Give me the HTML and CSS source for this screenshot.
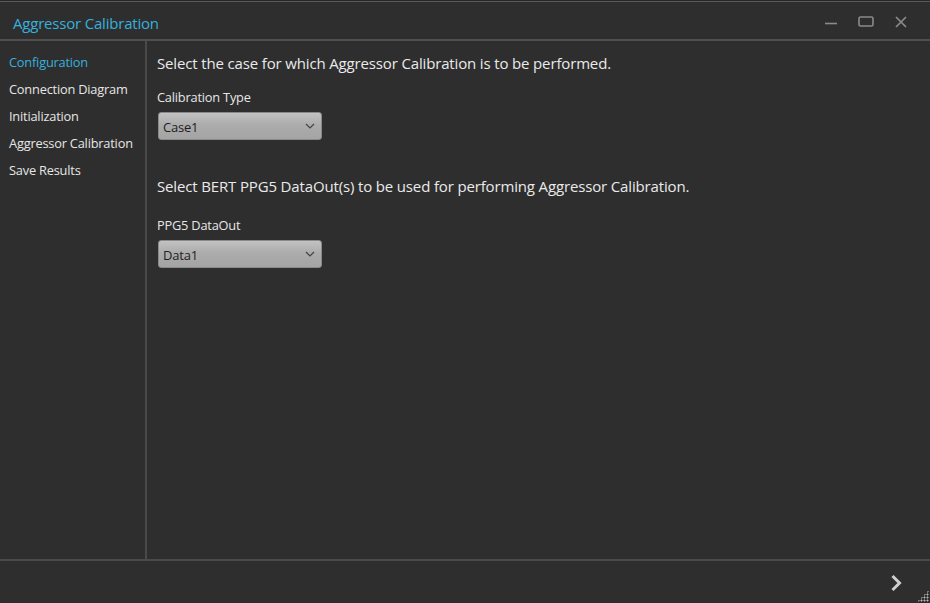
FILE: index.html
```html
<!DOCTYPE html>
<html>
<head>
<meta charset="utf-8">
<link rel="stylesheet" href="styles.css">
</head>
<body>
<div class="window">
  <div class="topstrip"></div>
  <header class="titlebar">
    <div class="title">Aggressor Calibration</div>
    <div class="controls">
      <svg class="ctl" width="14" height="14" viewBox="0 0 14 14"><path d="M1 8.5h12" stroke="#8a8a8a" stroke-width="1.6"/></svg>
      <svg class="ctl" width="16" height="14" viewBox="0 0 16 14"><rect x="1" y="2" width="14" height="9" rx="1.5" fill="none" stroke="#8a8a8a" stroke-width="1.6"/></svg>
      <svg class="ctl" width="14" height="14" viewBox="0 0 14 14"><path d="M2 2l10 10M12 2L2 12" stroke="#8a8a8a" stroke-width="1.7"/></svg>
    </div>
  </header>
  <div class="body">
    <nav class="sidebar">
      <div class="nav-item active">Configuration</div>
      <div class="nav-item">Connection Diagram</div>
      <div class="nav-item">Initialization</div>
      <div class="nav-item">Aggressor Calibration</div>
      <div class="nav-item">Save Results</div>
    </nav>
    <main class="content">
      <p class="instr">Select the case for which Aggressor Calibration is to be performed.</p>
      <div class="label">Calibration Type</div>
      <div class="select"><span>Case1</span>
        <svg width="10" height="6" viewBox="0 0 10 6"><path d="M1 1l4 4 4-4" fill="none" stroke="#444" stroke-width="1.2"/></svg>
      </div>
      <p class="instr second">Select BERT PPG5 DataOut(s) to be used for performing Aggressor Calibration.</p>
      <div class="label second">PPG5 DataOut</div>
      <div class="select"><span>Data1</span>
        <svg width="10" height="6" viewBox="0 0 10 6"><path d="M1 1l4 4 4-4" fill="none" stroke="#444" stroke-width="1.2"/></svg>
      </div>
    </main>
  </div>
  <footer class="footer">
    <svg class="next" width="12" height="18" viewBox="0 0 12 18"><path d="M2.5 2l7 7-7 7" fill="none" stroke="#cfcfcf" stroke-width="3"/></svg>
    <div class="grip"></div>
  </footer>
</div>
</body>
</html>
```
FILE: styles.css
```css
html, body {
  margin: 0;
  padding: 0;
  background: #2d2d2d;
}
body {
  font-family: "Open Sans", "Noto Sans", sans-serif;
  color: #e8e8e8;
}
.window {
  width: 930px;
  height: 603px;
  display: flex;
  flex-direction: column;
  background: #2e2e2e;
  overflow: hidden;
}
.topstrip {
  height: 1px;
  background: #262626;
  border-bottom: 1px solid #5a5a5a;
}
.titlebar {
  height: 37px;
  display: flex;
  align-items: center;
  justify-content: space-between;
  border-bottom: 2px solid #4f4f4f;
}
.title {
  margin-left: 13px;
  margin-top: 4px;
  font-size: 15px;
  color: #37b0de;
  letter-spacing: -0.2px;
}
.controls {
  display: flex;
  align-items: center;
  gap: 20px;
  margin-right: 22px;
  margin-top: 2px;
}
.body {
  flex: 1;
  display: flex;
  min-height: 0;
}
.sidebar {
  width: 145px;
  border-right: 2px solid #4a4a4a;
  padding-top: 12px;
  box-sizing: content-box;
}
.nav-item {
  height: 27px;
  line-height: 19px;
  padding-left: 9px;
  font-size: 12.8px;
  color: #e6e6e6;
  letter-spacing: -0.2px;
  white-space: nowrap;
}
.nav-item.active {
  color: #37b0de;
}
.content {
  flex: 1;
  padding-left: 10px;
  padding-top: 12px;
}
.instr {
  margin: 0;
  font-size: 15px;
  line-height: 20px;
  letter-spacing: -0.15px;
  color: #eaeaea;
}
.instr.second {
  margin-top: 36px;
}
.label {
  margin-top: 16px;
  font-size: 12.8px;
  line-height: 17px;
  letter-spacing: -0.2px;
  color: #e6e6e6;
}
.label.second {
  margin-top: 21px;
}
.select {
  margin-top: 6px;
  margin-left: 1px;
  width: 164px;
  height: 28px;
  box-sizing: border-box;
  border: 1px solid #8a8a8a;
  border-radius: 3px;
  background: linear-gradient(#c2c2c2, #acacac 45%, #a4a4a4);
  display: flex;
  align-items: center;
  justify-content: space-between;
  padding: 0 6px 0 4px;
  font-size: 13px;
  color: #1e1e1e;
  letter-spacing: -0.2px;
}
.select span {
  margin-top: 1px;
}
.footer {
  height: 42px;
  border-top: 2px solid #4a4a4a;
  display: flex;
  align-items: center;
  justify-content: flex-end;
  position: relative;
}
.next {
  margin-right: 28px;
  margin-top: 2px;
}
.grip {
  position: absolute;
  right: 1px;
  bottom: 1px;
  width: 12px;
  height: 12px;
  background:
    radial-gradient(circle, #bbb 0.9px, transparent 1.1px) 0 0 / 3px 3px;
  clip-path: polygon(100% 0, 100% 100%, 0 100%);
}
```
